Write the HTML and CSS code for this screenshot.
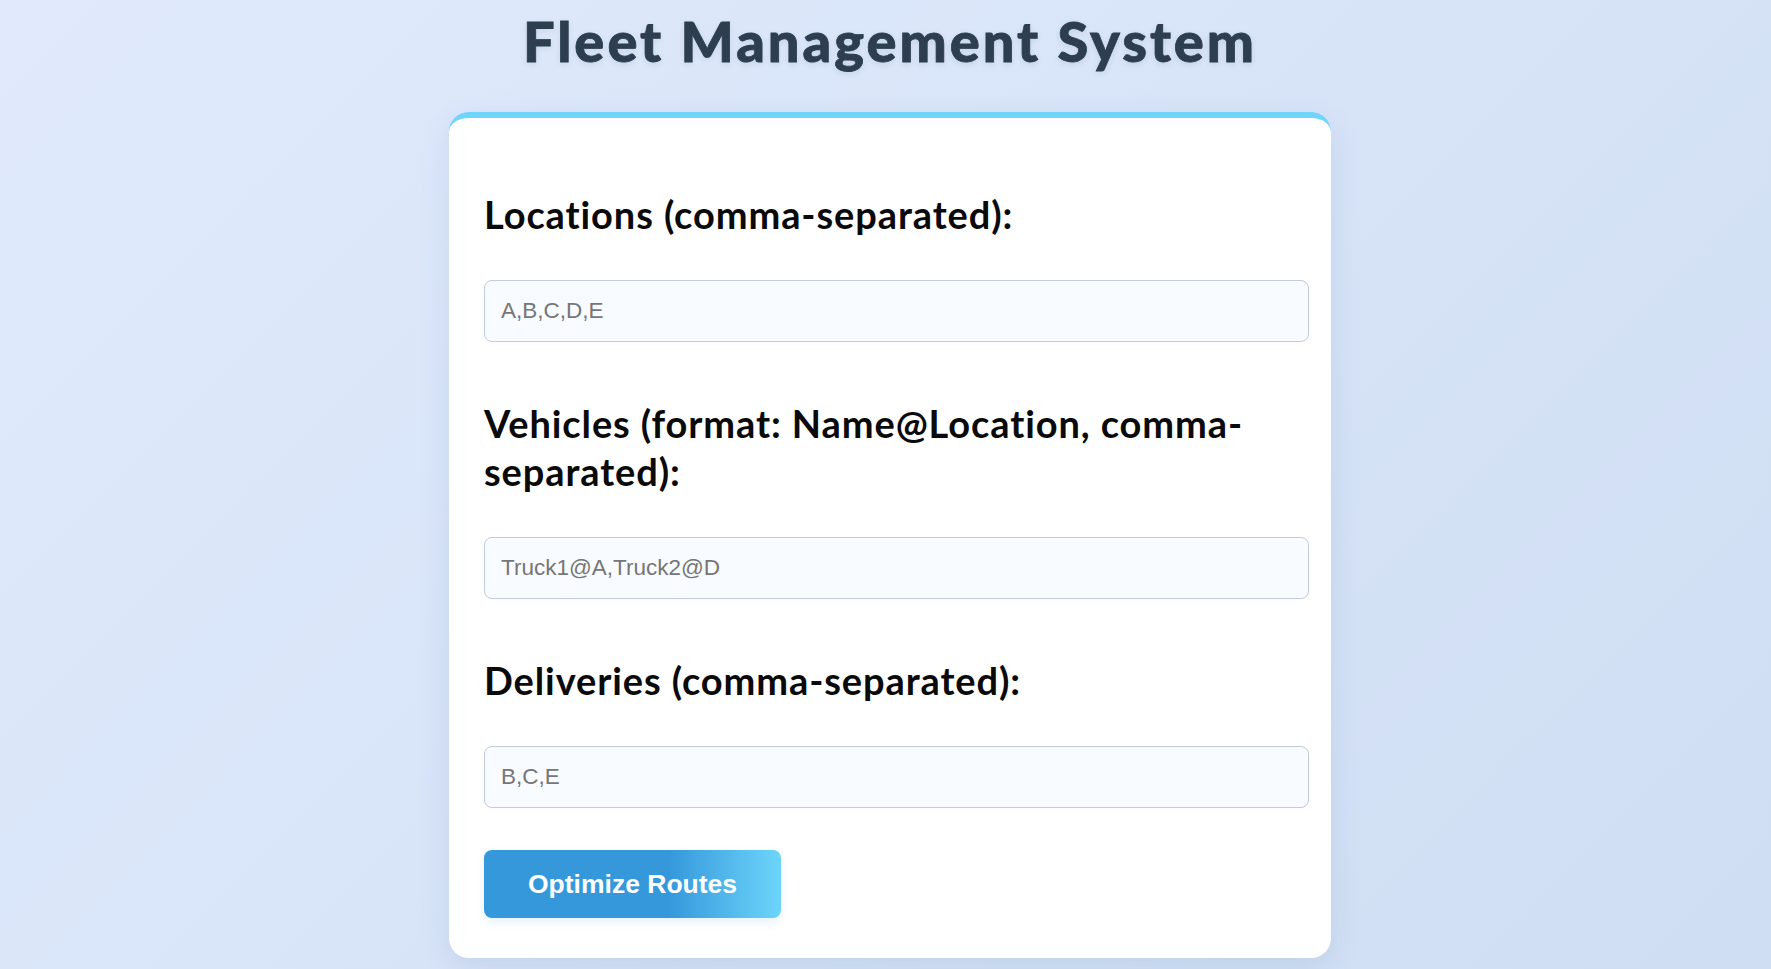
FILE: index.html
```html
<!DOCTYPE html>
<html lang="en">
<head>
<meta charset="utf-8">
<title>Fleet Management System</title>
<link rel="stylesheet" href="styles.css">
</head>
<body>
<div class="page">
  <h1 class="title">Fleet Management System</h1>
  <form class="card">
    <label class="label" for="locations">Locations (comma-separated):</label>
    <input class="field" id="locations" type="text" placeholder="A,B,C,D,E">
    <label class="label" for="vehicles">Vehicles (format: Name@Location, comma-separated):</label>
    <input class="field" id="vehicles" type="text" placeholder="Truck1@A,Truck2@D">
    <label class="label" for="deliveries">Deliveries (comma-separated):</label>
    <input class="field" id="deliveries" type="text" placeholder="B,C,E">
    <button class="btn" type="button">Optimize Routes</button>
  </form>
</div>
</body>
</html>
```
FILE: styles.css
```css
html, body {
  margin: 0;
  height: 100%;
}
body {
  background: linear-gradient(135deg, #e0eafc 0%, #cfdef3 100%);
  font-family: "Lato", "Open Sans", "Noto Sans", sans-serif;
  overflow: hidden;
}
.page {
  box-sizing: border-box;
  min-height: 100%;
  padding: 7px 0 0 9px;
  display: flex;
  flex-direction: column;
  align-items: center;
}
.title {
  margin: 0;
  font-size: 56px;
  line-height: 1.2;
  font-weight: 900;
  letter-spacing: 3px;
  color: #2c3e50;
  -webkit-text-stroke: 0.8px #2c3e50;
  text-shadow: 0 2px 6px rgba(44, 62, 80, 0.12);
}
.card {
  box-sizing: border-box;
  width: 882px;
  margin-top: 38px;
  padding: 35px 22px 40px 35px;
  background: #fff;
  border-top: 6px solid #6fd5fb;
  border-radius: 20px;
  box-shadow: 0 10px 30px rgba(60, 100, 160, 0.12);
  display: flex;
  flex-direction: column;
  align-items: flex-start;
}
.label {
  display: block;
  margin: 37px 0 42px;
  font-size: 38px;
  line-height: 48px;
  font-weight: 700;
  letter-spacing: 0.9px;
  color: #0a0a0a;
}
.field + .label {
  margin-top: 39px;
}
.field {
  box-sizing: border-box;
  width: 100%;
  height: 62px;
  margin: 0 0 18px;
  padding: 18px 16px;
  border: 1px solid #c3ccd8;
  border-radius: 8px;
  background: #f8fbff;
  font-family: "Liberation Sans", Arial, sans-serif;
  font-size: 22.5px;
  line-height: 24px;
  color: #333;
  box-shadow: 0 2px 6px rgba(0, 0, 0, 0.02);
  outline: none;
}
.field::placeholder {
  color: #767676;
}
.btn {
  margin-top: 24px;
  height: 68px;
  padding: 0 44px;
  border: none;
  border-radius: 8px;
  background: linear-gradient(90deg, #3498db 0%, #3498db 62%, #6dd5fa 100%);
  color: #fff;
  font-family: "Liberation Sans", Arial, sans-serif;
  font-size: 26.5px;
  font-weight: 700;
  box-shadow: 0 4px 10px rgba(52, 152, 219, 0.12);
  cursor: pointer;
}
```
